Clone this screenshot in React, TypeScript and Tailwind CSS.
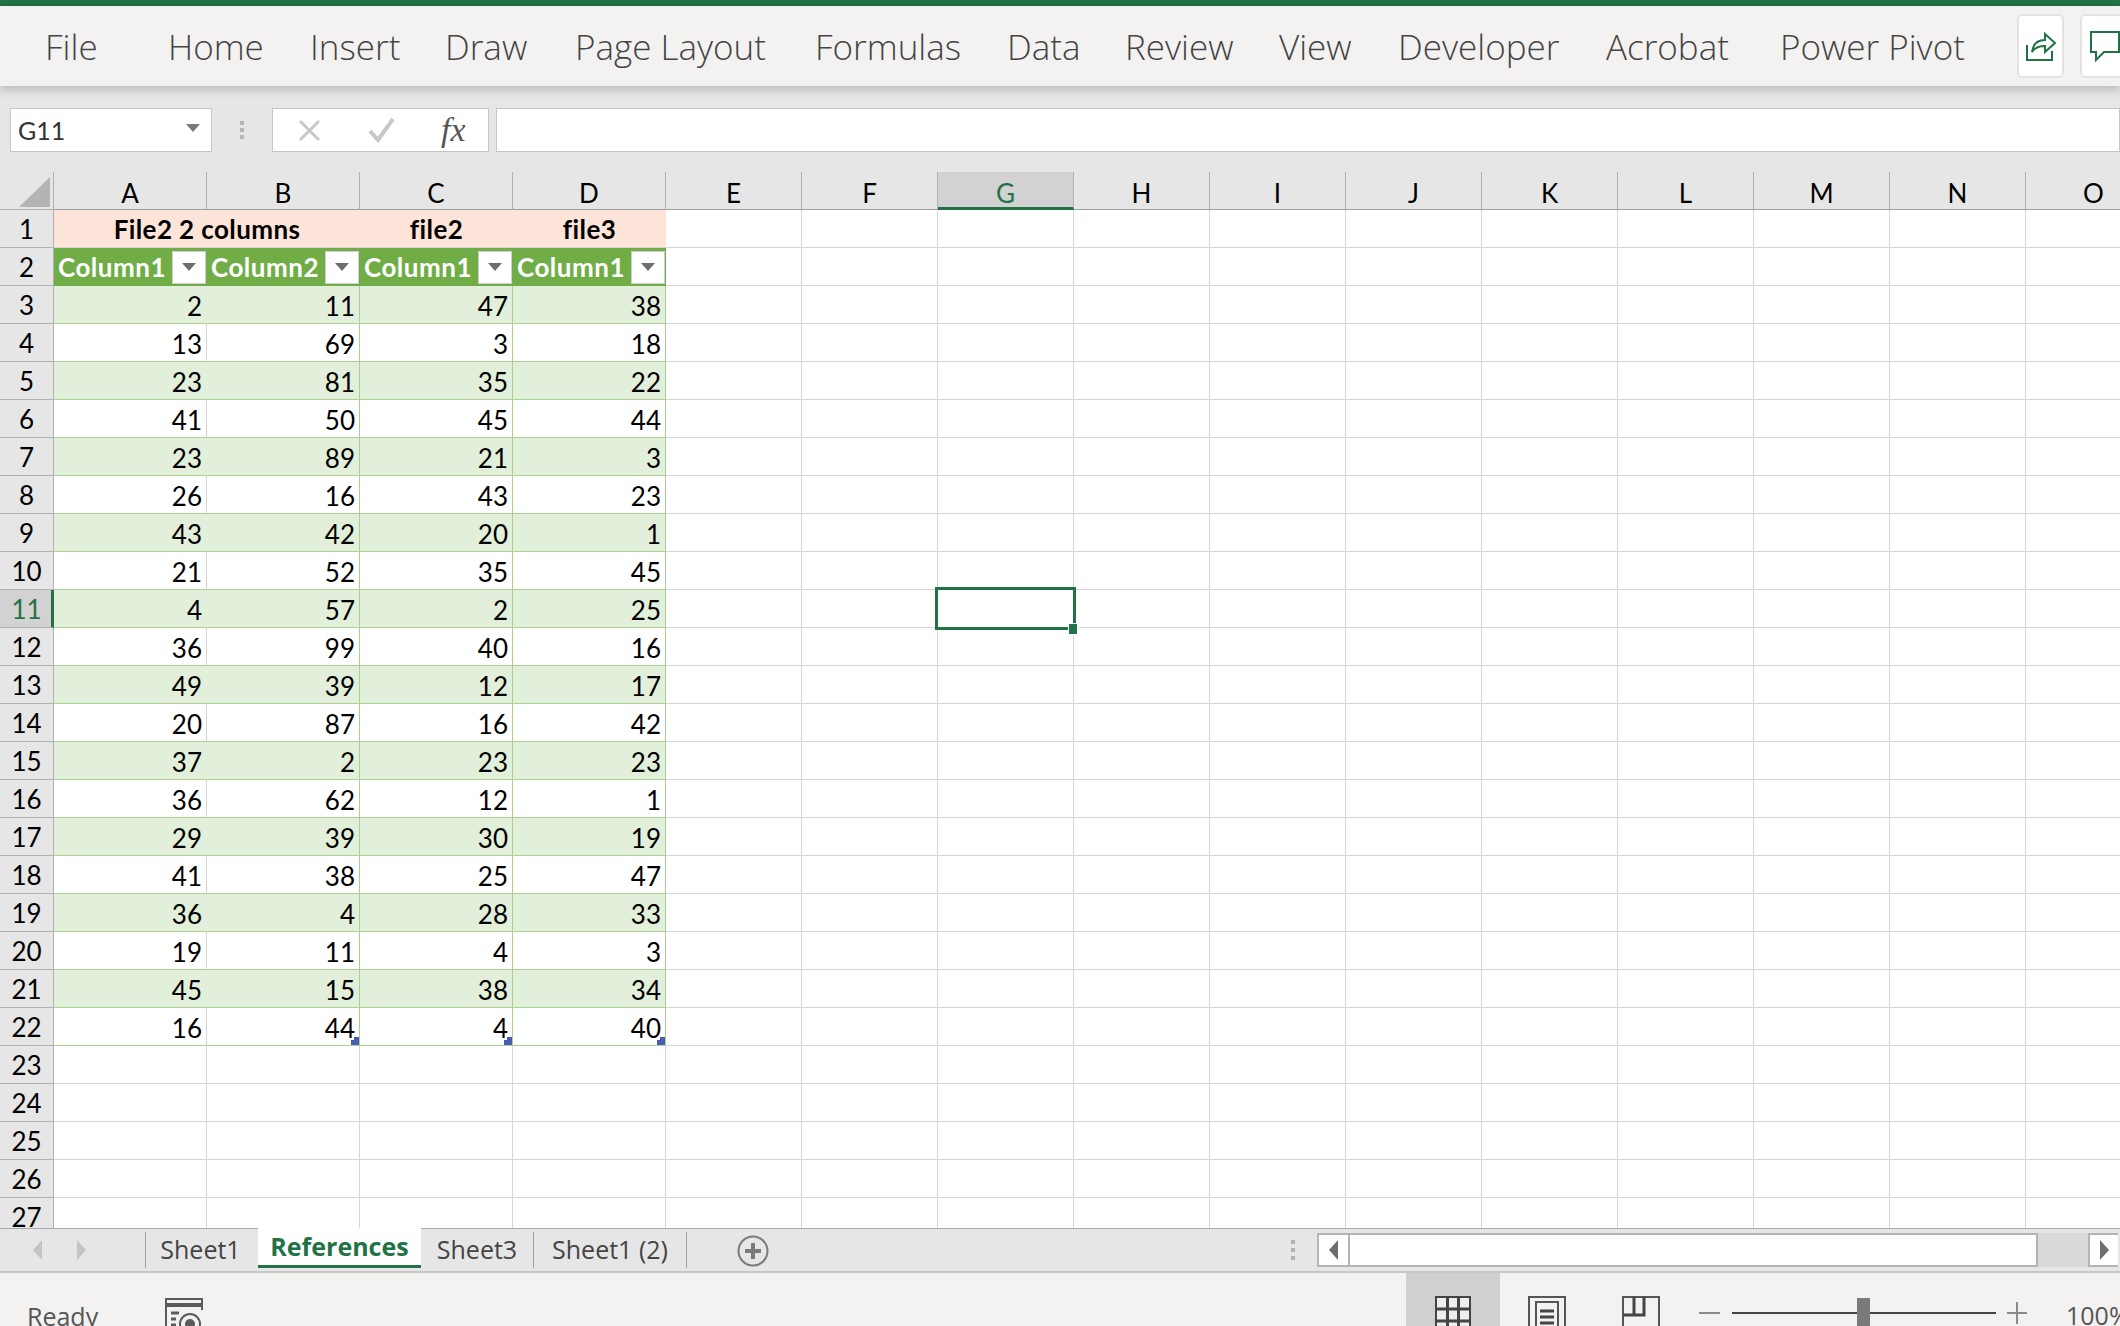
import React from 'react'

const ribbonTabs = [
  { label: 'File', className: 'w-[123px]' },
  { label: 'Home', className: 'w-[142px]' },
  { label: 'Insert', className: 'w-[135px]' },
  { label: 'Draw', className: 'w-[130px]' },
  { label: 'Page Layout', className: 'w-[240px]' },
  { label: 'Formulas', className: 'w-[192px]' },
  { label: 'Data', className: 'w-[118px]' },
  { label: 'Review', className: 'w-[154px]' },
  { label: 'View', className: 'w-[119px]' },
  { label: 'Developer', className: 'w-[208px]' },
  { label: 'Acrobat', className: 'w-[174px]' },
  { label: 'Power Pivot', className: 'w-[237px]' },
]

const extraColumns = ['E', 'F', 'G', 'H', 'I', 'J', 'K', 'L', 'M', 'N', 'O']

const data = [
  [2, 11, 47, 38],
  [13, 69, 3, 18],
  [23, 81, 35, 22],
  [41, 50, 45, 44],
  [23, 89, 21, 3],
  [26, 16, 43, 23],
  [43, 42, 20, 1],
  [21, 52, 35, 45],
  [4, 57, 2, 25],
  [36, 99, 40, 16],
  [49, 39, 12, 17],
  [20, 87, 16, 42],
  [37, 2, 23, 23],
  [36, 62, 12, 1],
  [29, 39, 30, 19],
  [41, 38, 25, 47],
  [36, 4, 28, 33],
  [19, 11, 4, 3],
  [45, 15, 38, 34],
  [16, 44, 4, 40],
]

function Ribbon() {
  return (
    <div className="relative z-10 flex h-[80px] shrink-0 items-center bg-[#f3f2f1] pl-[45px] text-[#444444] shadow-[0_3px_10px_rgba(0,0,0,0.22)] [font-family:'Open_Sans',sans-serif]">
      {ribbonTabs.map((tab) => (
        <div key={tab.label} className={`${tab.className} shrink-0 whitespace-nowrap pt-[2px] text-[35px] font-light leading-[60px]`}>
          {tab.label}
        </div>
      ))}
      <div className="flex h-[64px] w-[47px] shrink-0 items-center justify-center rounded-[5px] border-2 border-[#e4e3e2] bg-white">
        <svg width="32" height="32" viewBox="0 0 32 32" fill="none" stroke="#217346" strokeWidth="2">
          <path d="M2 15V30H27V21" />
          <path d="M7 22c1-8 5-12 13-12V4l10 9-10 9v-6c-6 0-10 1-13 6z" />
        </svg>
      </div>
      <div className="ml-[16px] flex h-[64px] w-[60px] shrink-0 items-center rounded-[5px] border-2 border-[#e4e3e2] bg-white pl-[8px]">
        <svg width="30" height="32" viewBox="0 0 30 32" fill="none" stroke="#217346" strokeWidth="2">
          <path d="M1 2H29V22H14L6 30V22H1Z" />
        </svg>
      </div>
    </div>
  )
}

function FormulaBar() {
  return (
    <div className="flex h-[86px] shrink-0 items-start bg-[#e6e6e6] pt-[22px]">
      <div className="ml-[10px] flex h-[44px] w-[202px] shrink-0 items-center justify-between border border-[#c6c6c6] bg-white pl-[7px] pr-[11px] text-[25px] text-[#333333] [font-family:Lato,sans-serif]">
        <span className="pt-[2px]">G11</span>
        <svg width="14" height="8" viewBox="0 0 14 8" className="mb-[4px]">
          <path d="M0 0H14L7 8Z" fill="#7a7a7a" />
        </svg>
      </div>
      <div className="flex h-[44px] w-[60px] shrink-0 flex-col items-center justify-center gap-[3px]">
        <div className="h-[4px] w-[4px] bg-[#b4b4b4]" />
        <div className="h-[4px] w-[4px] bg-[#b4b4b4]" />
        <div className="h-[4px] w-[4px] bg-[#b4b4b4]" />
      </div>
      <div className="flex h-[44px] w-[217px] shrink-0 items-center border border-[#c6c6c6] bg-white">
        <svg width="24" height="24" viewBox="0 0 24 24" className="ml-[25px]" fill="none" stroke="#c8c8c8" strokeWidth="3">
          <path d="M2 3L21 22M21 3L2 22" />
        </svg>
        <svg width="28" height="26" viewBox="0 0 28 26" className="ml-[46px]" fill="none" stroke="#c8c8c8" strokeWidth="4">
          <path d="M2 14L10 23L25 2" />
        </svg>
        <span className="ml-[45px] text-[34px] italic leading-none text-[#555555] [font-family:'Liberation_Serif',serif]">fx</span>
      </div>
      <div className="ml-[7px] h-[44px] flex-1 border border-[#c6c6c6] bg-white" />
    </div>
  )
}

function ColumnHeader({ label, active }: { label: string; active?: boolean }) {
  return (
    <div
      className={
        active
          ? 'flex items-center justify-center border-b-[3px] border-b-[#217346] border-r border-r-[#b1b1b1] bg-[#d2d2d2] pt-[6px] text-[#217346]'
          : 'flex items-center justify-center border-b border-r border-b-[#9e9e9e] border-r-[#b1b1b1] bg-[#e6e6e6] pt-[4px] text-black'
      }
    >
      {label}
    </div>
  )
}

function RowHeader({ n, active }: { n: number; active?: boolean }) {
  return (
    <div
      className={
        active
          ? 'flex items-center justify-center border-b border-b-[#b1b1b1] border-r-[3px] border-r-[#217346] bg-[#d2d2d2] pl-[2px] pt-[1px] text-[#217346]'
          : 'flex items-center justify-center border-b border-r border-[#b1b1b1] bg-[#e6e6e6] pt-[1px] text-black'
      }
    >
      {n}
    </div>
  )
}

function FilterButton() {
  return (
    <div className="mr-[1px] flex h-[33px] w-[34px] shrink-0 items-center justify-center border border-[#d0d0d0] bg-white">
      <svg width="14" height="8" viewBox="0 0 14 8">
        <path d="M0 0H14L7 8Z" fill="#6e6e6e" />
      </svg>
    </div>
  )
}

function TableEndMark() {
  return (
    <svg width="8" height="8" viewBox="0 0 8 8" className="absolute bottom-0 right-0">
      <path d="M3 0H8V8H0V3H3Z" fill="#4a5bb5" />
    </svg>
  )
}

function EmptyCells({ row }: { row: number }) {
  return (
    <>
      {extraColumns.map((c) => (
        <div key={c} className="relative border-b border-r border-[#d6d6d6] bg-white">
          {c === 'G' && row === 11 && (
            <div className="absolute -inset-[3px] z-10 border-[3px] border-[#217346]">
              <div className="absolute -bottom-[8px] -right-[5px] h-[12px] w-[10px] border border-white bg-[#217346]" />
            </div>
          )}
        </div>
      ))}
    </>
  )
}

function SheetGrid() {
  const blankRows = [23, 24, 25, 26, 27]

  return (
    <div className="grid min-h-0 flex-1 auto-rows-[38px] grid-cols-[54px_153px_153px_153px_153px_repeat(11,136px)] overflow-hidden bg-white text-[26px] leading-none text-black [font-family:Lato,sans-serif]">
      {/* Column headers */}
      <div className="relative border-b border-r border-[#b1b1b1] bg-[#e6e6e6]">
        <svg width="32" height="30" viewBox="0 0 32 30" className="absolute bottom-[2px] right-[2px]">
          <path d="M31 0V30H0Z" fill="#b4b4b4" />
        </svg>
      </div>
      {['A', 'B', 'C', 'D'].map((c) => (
        <ColumnHeader key={c} label={c} />
      ))}
      {extraColumns.map((c) => (
        <ColumnHeader key={c} label={c} active={c === 'G'} />
      ))}

      {/* Row 1 */}
      <RowHeader n={1} />
      <div className="col-span-2 flex items-center justify-center border-b border-[#d6d6d6] bg-[#fde4d8] font-bold tracking-[0.4px]">File2 2 columns</div>
      <div className="flex items-center justify-center border-b border-[#d6d6d6] bg-[#fde4d8] font-bold tracking-[0.4px]">file2</div>
      <div className="flex items-center justify-center border-b border-[#d6d6d6] bg-[#fde4d8] font-bold tracking-[0.4px]">file3</div>
      <EmptyCells row={1} />

      {/* Row 2 */}
      <RowHeader n={2} />
      {['Column1', 'Column2', 'Column1', 'Column1'].map((name, i) => (
        <div key={i} className="flex items-center justify-between bg-[#70ad47] pl-[4px] font-bold tracking-[0.5px] text-white">
          <span>{name}</span>
          <FilterButton />
        </div>
      ))}
      <EmptyCells row={2} />

      {/* Table rows */}
      {data.map((values, i) => {
        const row = i + 3
        const banded = row % 2 === 1
        return (
          <React.Fragment key={row}>
            <RowHeader n={row} active={row === 11} />
            {values.map((v, j) => (
              <div
                key={j}
                className={`relative flex items-center justify-end border-b border-r border-b-[#a9d08e] pr-[4px] pt-[2px] ${
                  banded ? 'bg-[#e2efda]' : 'bg-white'
                } ${j === 0 ? (banded ? 'border-r-[#e2efda]' : 'border-r-[#d6d6d6]') : 'border-r-[#a9d08e]'}`}
              >
                {v}
                {row === 22 && j > 0 && <TableEndMark />}
              </div>
            ))}
            <EmptyCells row={row} />
          </React.Fragment>
        )
      })}

      {/* Blank rows under the table */}
      {blankRows.map((row) => (
        <React.Fragment key={row}>
          <RowHeader n={row} />
          {[0, 1, 2, 3].map((j) => (
            <div key={j} className="border-b border-r border-[#d6d6d6] bg-white" />
          ))}
          <EmptyCells row={row} />
        </React.Fragment>
      ))}
    </div>
  )
}

function SheetTabs() {
  return (
    <div className="flex h-[45px] shrink-0 border-b-2 border-t border-b-[#c6c6c6] border-t-[#a8a8a8] bg-[#e6e6e6] text-[25px] text-[#444444] [font-family:'Open_Sans',sans-serif]">
      <div className="flex w-[145px] shrink-0 items-center">
        <svg width="10" height="20" viewBox="0 0 10 20" className="ml-[33px]">
          <path d="M9 0V20L0 10Z" fill="#c4c4c4" />
        </svg>
        <svg width="10" height="20" viewBox="0 0 10 20" className="ml-[33px]">
          <path d="M1 0V20L10 10Z" fill="#c4c4c4" />
        </svg>
      </div>
      <div className="my-[3px] flex w-[113px] shrink-0 items-center justify-center border-l border-[#a0a0a0] pr-[3px]">Sheet1</div>
      <div className="-mt-px mb-[3px] flex w-[163px] shrink-0 items-center justify-center border-b-[3px] border-[#217346] bg-white font-bold text-[#217346]">
        References
      </div>
      <div className="my-[3px] flex w-[113px] shrink-0 items-center justify-center border-r border-[#a0a0a0]">Sheet3</div>
      <div className="my-[3px] flex w-[153px] shrink-0 items-center justify-center border-r border-[#a0a0a0]">Sheet1 (2)</div>
      <svg width="32" height="32" viewBox="0 0 32 32" className="ml-[50px] mt-[6px] shrink-0" fill="none">
        <circle cx="16" cy="16" r="14.5" stroke="#7a7a7a" strokeWidth="2" />
        <path d="M16 8V24M8 16H24" stroke="#7a7a7a" strokeWidth="4" />
      </svg>
      <div className="ml-[522px] flex w-[4px] shrink-0 flex-col justify-center gap-[4px]">
        <div className="h-[4px] w-[4px] bg-[#b4b4b4]" />
        <div className="h-[4px] w-[4px] bg-[#b4b4b4]" />
        <div className="h-[4px] w-[4px] bg-[#b4b4b4]" />
      </div>
      <div className="ml-[22px] mt-[4px] flex h-[34px] w-[771px] shrink-0 bg-[#d9d9d9]">
        <div className="flex w-[33px] shrink-0 items-center justify-center border-2 border-[#b4b4b4] bg-white">
          <svg width="9" height="20" viewBox="0 0 9 20">
            <path d="M9 0V20L0 10Z" fill="#6e6e6e" />
          </svg>
        </div>
        <div className="w-[688px] shrink-0 border-y-2 border-r-2 border-[#b4b4b4] bg-white" />
        <div className="w-[50px] shrink-0" />
      </div>
      <div className="mt-[4px] flex h-[34px] w-[30px] shrink-0 items-center justify-center border-2 border-r-0 border-[#b4b4b4] bg-white">
        <svg width="9" height="20" viewBox="0 0 9 20">
          <path d="M0 0V20L9 10Z" fill="#6e6e6e" />
        </svg>
      </div>
    </div>
  )
}

function StatusBar() {
  return (
    <div className="flex h-[53px] shrink-0 overflow-hidden bg-[#f3f2f1] text-[25px] text-[#555555] [font-family:'Open_Sans',sans-serif]">
      <div className="w-[165px] shrink-0 pl-[27px] pt-[26px] leading-[34px]">Ready</div>
      <svg width="38" height="44" viewBox="0 0 38 44" className="mt-[25px] shrink-0" fill="none">
        <path d="M1 28V1H37V12" stroke="#5a5a5a" strokeWidth="2" />
        <path d="M1 7H37" stroke="#5a5a5a" strokeWidth="4" />
        <path d="M6 15H14M6 21H11M6 27H11" stroke="#5a5a5a" strokeWidth="3" />
        <circle cx="25" cy="26" r="10" stroke="#5a5a5a" strokeWidth="2" />
        <circle cx="25" cy="26" r="5" fill="#5a5a5a" />
      </svg>
      <div className="ml-[1203px] flex h-[60px] w-[94px] shrink-0 justify-center bg-[#d2d0ce] pt-[23px]">
        <svg width="36" height="40" viewBox="0 0 36 40" fill="none">
          <path d="M1 1H35V40H1Z" stroke="#444444" strokeWidth="2" fill="#eeeeee" />
          <path d="M12.5 1V40M23.5 1V40M1 13H35M1 25H35" stroke="#444444" strokeWidth="3" />
        </svg>
      </div>
      <div className="flex w-[94px] shrink-0 justify-center pt-[23px]">
        <svg width="38" height="40" viewBox="0 0 38 40" fill="none">
          <path d="M1 1H37V40H1Z" stroke="#555555" strokeWidth="2" />
          <path d="M8 6H30V40H8Z" stroke="#555555" strokeWidth="2" />
          <path d="M12 15H26M12 21H26M12 27H26" stroke="#444444" strokeWidth="3" />
        </svg>
      </div>
      <div className="flex w-[94px] shrink-0 justify-center pt-[23px]">
        <svg width="38" height="40" viewBox="0 0 38 40" fill="none">
          <path d="M1 40V1H37V40" stroke="#555555" strokeWidth="2" />
          <path d="M1 19H22V1M12 1V19" stroke="#444444" strokeWidth="3" />
        </svg>
      </div>
      <div className="ml-[11px] mt-[39px] h-[2px] w-[21px] shrink-0 bg-[#8a8a8a]" />
      <div className="relative ml-[12px] mt-[39px] h-[2px] w-[264px] shrink-0 bg-[#444444]">
        <div className="absolute -top-[14px] left-[125px] h-[40px] w-[13px] bg-[#7a7a7a]" />
      </div>
      <svg width="22" height="22" viewBox="0 0 22 22" className="ml-[10px] mt-[29px] shrink-0" fill="none">
        <path d="M11 0V22M1 11H21" stroke="#8a8a8a" strokeWidth="2" />
      </svg>
      <div className="ml-[38px] whitespace-nowrap pt-[25px] leading-[34px]">100%</div>
    </div>
  )
}

export default function App() {
  return (
    <div className="flex h-[1326px] w-[2120px] flex-col overflow-hidden bg-white">
      <div className="h-[6px] shrink-0 bg-[#217346]" />
      <Ribbon />
      <FormulaBar />
      <SheetGrid />
      <SheetTabs />
      <StatusBar />
    </div>
  )
}
